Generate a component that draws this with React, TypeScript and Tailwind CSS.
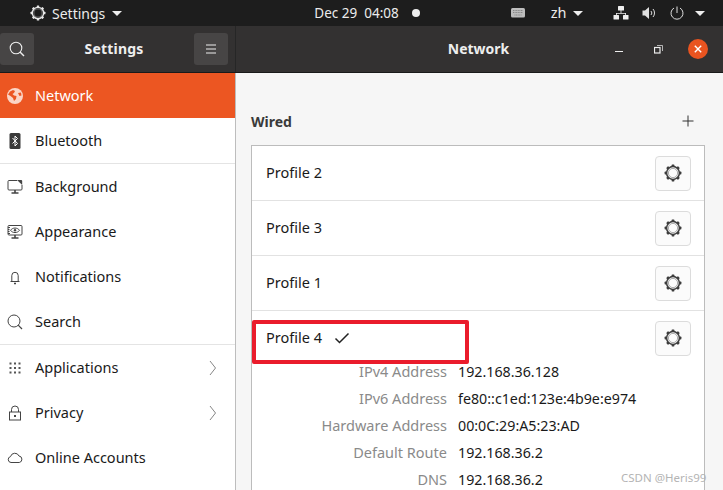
import React from "react";

const font = { fontFamily: '"Noto Sans", sans-serif' };

function Gear({ size = 18, color = "#3d3d3d" }: { size?: number; color?: string }) {
  const teeth = Array.from({ length: 8 }, (_, i) => i * 45);
  return (
    <svg width={size} height={size} viewBox="0 0 18 18" fill="none">
      {teeth.map((a) => (
        <rect key={a} x="7.6" y="0.6" width="2.8" height="2.4" rx="0.6" fill={color} transform={`rotate(${a} 9 9)`} />
      ))}
      <circle cx="9" cy="9" r="6.4" stroke={color} strokeWidth="1.5" />
      <circle cx="9" cy="9" r="4.6" stroke={color} strokeWidth="0.7" opacity="0.6" />
    </svg>
  );
}

const I = ({ children }: { children: React.ReactNode }) => (
  <svg width="16" height="16" viewBox="0 0 16 16" fill="none" stroke="#444" strokeWidth="1">
    {children}
  </svg>
);

const icons: Record<string, React.ReactNode> = {
  Bluetooth: (
    <svg width="16" height="16" viewBox="0 0 16 16" fill="none">
      <rect x="2.500" y="0" width="11" height="16" rx="1.500" fill="#3a3a3a" />
      <path d="M5.500 5l5 5.500L8 13V3l2.500 2.500-5 5" stroke="#fff" strokeWidth="1" />
    </svg>
  ),
  Background: (
    <I>
      <path d="M10 1.500H2a1 1 0 0 0-1 1V10a1 1 0 0 0 1 1h12a1 1 0 0 0 1-1V6" />
      <path d="M10 1h4.200a1 1 0 0 1 1 1v4z" fill="#444" stroke="none" />
      <path d="M8 11v2.500M4.500 14h7" strokeWidth="1.600" />
    </I>
  ),
  Appearance: (
    <I>
      <rect x="1" y="1.500" width="14" height="9.500" rx="1" />
      <path d="M3.500 6.300c2-3 7-3 9 0-2 3-7 3-9 0z" />
      <circle cx="8" cy="6.300" r="1.200" fill="#444" stroke="none" />
      <path d="M1 3.500h2M1 5.500h1.500M1 7.500h1.500M1 9.500h2" />
      <path d="M8 11v2.500M4.500 14h7" strokeWidth="1.600" />
    </I>
  ),
  Notifications: (
    <I>
      <path d="M3.500 12.500h9M4.800 12.500V6.500a3.200 3.200 0 0 1 6.400 0v6" />
      <path d="M7 14.500h2" strokeWidth="1.400" />
    </I>
  ),
  Search: (
    <I>
      <circle cx="7" cy="7" r="6" />
      <path d="M11.200 11.200l3.800 3.800" strokeWidth="1.200" />
    </I>
  ),
  Applications: (
    <svg width="16" height="16" viewBox="0 0 16 16" fill="#555">
      {[2.500, 7, 11.500].flatMap((y) =>
        [2.500, 7, 11.500].map((x) => <rect key={`${x}-${y}`} x={x} y={y} width="2" height="2" />)
      )}
    </svg>
  ),
  Privacy: (
    <I>
      <rect x="2.500" y="7" width="11" height="8" />
      <path d="M4.500 7V4.500a3.500 3.500 0 0 1 7 0V7" />
      <rect x="7" y="10" width="2" height="2" fill="#444" stroke="none" />
    </I>
  ),
  "Online Accounts": (
    <I>
      <path d="M4 12.500a3 3 0 0 1-.5-5.900 4.500 4.500 0 0 1 8.500-.6 3.300 3.300 0 0 1 .3 6.500z" />
    </I>
  ),
};

const Chevron = () => (
  <svg width="8" height="16" viewBox="0 0 8 16" fill="none" stroke="#777" strokeWidth="0.9">
    <path d="M1 1l5.500 7L1 15" />
  </svg>
);

function NavRow({ label, chevron, divider }: { label: string; chevron?: boolean; divider?: boolean }) {
  return (
    <div className={`flex items-center pl-[7px] pr-[18px] ${divider ? "h-[46px] border-b border-[#e4e4e4]" : "h-[45px]"}`}>
      <span className="flex w-[28px] shrink-0 items-center">{icons[label]}</span>
      <span className="flex-1 text-[14.5px] text-[#1a1a1a]">{label}</span>
      {chevron && <Chevron />}
    </div>
  );
}

const Caret = () => <span className="inline-block h-0 w-0 border-x-[5px] border-t-[5px] border-x-transparent border-t-[#eee]" />;

function Profile({ name, check, last }: { name: string; check?: boolean; last?: boolean }) {
  return (
    <div className={`flex items-center pl-[14px] pr-[13px] ${last ? "h-[54px]" : "h-[55px] border-b border-[#e2e2e2]"}`}>
      <span className="text-[14.5px] text-[#1a1a1a]">{name}</span>
      {check && (
        <svg className="ml-[12px]" width="16" height="12" viewBox="0 0 16 12" fill="none" stroke="#222" strokeWidth="1.500">
          <path d="M1.500 6.500l4 4 9-9" />
        </svg>
      )}
      <button className="ml-auto flex h-[35px] w-[36px] items-center justify-center rounded-[4px] border border-[#dcdcdc] bg-[#fbfbfb]">
        <Gear />
      </button>
    </div>
  );
}

const details = [
  ["IPv4 Address", "192.168.36.128"],
  ["IPv6 Address", "fe80::c1ed:123e:4b9e:e974"],
  ["Hardware Address", "00:0C:29:A5:23:AD"],
  ["Default Route", "192.168.36.2"],
  ["DNS", "192.168.36.2"],
];

export default function App() {
  return (
    <div className="relative flex h-[490px] w-[723px] flex-col overflow-hidden bg-white" style={font}>
      {/* top bar */}
      <div className="flex h-[26px] shrink-0 items-center bg-[#1d1d1d] text-[14px] text-[#ececec]">
        <div className="ml-[30px] flex items-center gap-[7px]">
          <Gear size={16} color="#e8e8e8" />
          <span className="-ml-[1px]">Settings</span>
          <Caret />
        </div>
        <div className="ml-[192px] flex items-center text-[13.5px]">
          <span>Dec 29</span>
          <span className="ml-[7px]">04:08</span>
          <span className="ml-[13px] h-[8px] w-[8px] rounded-full bg-[#eee]" />
        </div>
        <svg className="ml-[90px]" width="16" height="12" viewBox="0 0 16 12">
          <rect x="1" y="1" width="14" height="9.500" rx="1.500" fill="#bdbdbd" />
          <path d="M3 3.500h10M3 5.500h10M4.500 8h7" stroke="#777" strokeWidth="0.800" strokeDasharray="1 0.6" />
        </svg>
        <span className="ml-[25px] text-[14.5px]">zh</span>
        <span className="ml-[7px] flex"><Caret /></span>
        <svg className="ml-[30px]" width="16" height="14" viewBox="0 0 16 14" fill="#eee">
          <rect x="5" y="0" width="6" height="4.500" rx="0.500" />
          <rect x="0.500" y="9" width="5.500" height="4.500" rx="0.500" />
          <rect x="10" y="9" width="5.500" height="4.500" rx="0.500" />
          <path d="M7.600 4h.8v3H13v2h-.8V7.800H3.800V9H3V7h4.600z" />
        </svg>
        <svg className="ml-[13px]" width="16" height="14" viewBox="0 0 16 14" fill="none">
          <path d="M0.500 4.500H3L7 1v12L3 9.500H0.500z" fill="#e0e0e0" />
          <path d="M9 5a3 3 0 0 1 0 4M11 3a6 6 0 0 1 0 8" stroke="#ddd" strokeWidth="1" />
        </svg>
        <svg className="ml-[12px]" width="14" height="14" viewBox="0 0 14 14" fill="none" stroke="#ddd" strokeWidth="1">
          <path d="M7 0.500V7" />
          <path d="M4 2a6 6 0 1 0 6 0" />
        </svg>
        <span className="ml-[11px] flex"><Caret /></span>
      </div>

      {/* header */}
      <div className="flex h-[47px] shrink-0 border-b border-[#1a1a1a] bg-[#333131]">
        <div className="flex w-[236px] shrink-0 items-center border-r border-[#262626] pr-[7px]">
          <button className="flex h-[32px] w-[34px] items-center justify-center rounded-[3px] bg-[#474545]">
            <svg width="16" height="16" viewBox="0 0 16 16" fill="none" stroke="#eee" strokeWidth="1.100">
              <circle cx="7" cy="7" r="5.800" />
              <path d="M11 11l4 4" strokeWidth="1.500" />
            </svg>
          </button>
          <span className="mb-[2px] flex-1 text-center text-[14px] font-bold tracking-[0.2px] text-[#eeeeee]">Settings</span>
          <button className="flex h-[32px] w-[34px] items-center justify-center rounded-[3px] bg-[#474545]">
            <svg width="12" height="10" viewBox="0 0 12 10" stroke="#eee" strokeWidth="1">
              <path d="M1 1h10M1 5h10M1 9h10" />
            </svg>
          </button>
        </div>
        <div className="relative flex flex-1 items-center justify-center">
          <span className="mb-[2px] mr-[2px] text-[14px] font-bold text-[#eeeeee]">Network</span>
          <div className="absolute right-[15px] top-[13px] flex items-center">
            <span className="mt-[5px] h-[1.5px] w-[8px] bg-[#eee]" />
            <svg className="ml-[31px]" width="9" height="9" viewBox="0 0 9 9" fill="none" stroke="#eee">
              <rect x="0.500" y="2.500" width="5.500" height="5.500" strokeWidth="1.200" />
              <path d="M3 .5h5.500V6" strokeWidth="0.700" />
            </svg>
            <span className="ml-[25px] flex h-[20px] w-[20px] items-center justify-center rounded-full bg-[#e95420]">
              <svg width="8" height="8" viewBox="0 0 8 8" stroke="#fff" strokeWidth="1.400">
                <path d="M.8.8l6.400 6.400M7.200.8L.8 7.200" />
              </svg>
            </span>
          </div>
        </div>
      </div>

      {/* body */}
      <div className="flex flex-1 overflow-hidden">
        <aside className="w-[236px] shrink-0 border-r border-[#bdbdbd] bg-white">
          <div className="flex h-[45px] items-center bg-[#ec5622] pl-[7px] text-white">
            <svg className="mr-[12px]" width="16" height="16" viewBox="0 0 16 16">
              <circle cx="8" cy="8" r="8" fill="#fbd5c6" />
              <path d="M3 3.500l3-1.500 2 1-1 2-1.500 1 1.500 1.500 2.500.5-.5 3-2 2-1-3-2.500-2L1 6.500zM11 5l3-.5.5 3-2 .5z" fill="#ec5622" />
            </svg>
            <span className="text-[14.5px]">Network</span>
          </div>
          <NavRow label="Bluetooth" divider />
          <NavRow label="Background" />
          <NavRow label="Appearance" />
          <NavRow label="Notifications" />
          <NavRow label="Search" divider />
          <NavRow label="Applications" chevron />
          <NavRow label="Privacy" chevron />
          <NavRow label="Online Accounts" />
        </aside>

        <main className="flex-1 bg-[#f6f6f6] pl-[15px] pr-[18px] pt-[38px]">
          <div className="flex h-[20px] items-center justify-between">
            <span className="text-[14px] font-bold text-[#3a3a3a]">Wired</span>
            <svg className="mr-[11px]" width="12" height="12" viewBox="0 0 12 12" stroke="#333" strokeWidth="1">
              <path d="M6 .5v11M.5 6h11" />
            </svg>
          </div>
          <div className="mt-[14px] border border-[#bcbcbc] bg-white">
            <Profile name="Profile 2" />
            <Profile name="Profile 3" />
            <Profile name="Profile 1" />
            <Profile name="Profile 4" check last />
            <div className="-mt-[7px] flex flex-col">
              {details.map(([k, v]) => (
                <div key={k} className="flex h-[27px] items-center">
                  <span className="w-[195px] shrink-0 text-right text-[14.5px] text-[#8a8a8a]">{k}</span>
                  <span className="ml-[11px] text-[14.25px] text-[#1a1a1a]">{v}</span>
                </div>
              ))}
            </div>
          </div>
        </main>
      </div>

      {/* annotation */}
      <div className="absolute left-[252px] top-[320px] h-[44px] w-[217px] rounded-[2px] border-[4px] border-[#ea1c2c]" />
      <span className="absolute left-[621px] top-[469px] text-[11.5px] text-[#b4b4b4]">CSDN @Heris99</span>
    </div>
  );
}
